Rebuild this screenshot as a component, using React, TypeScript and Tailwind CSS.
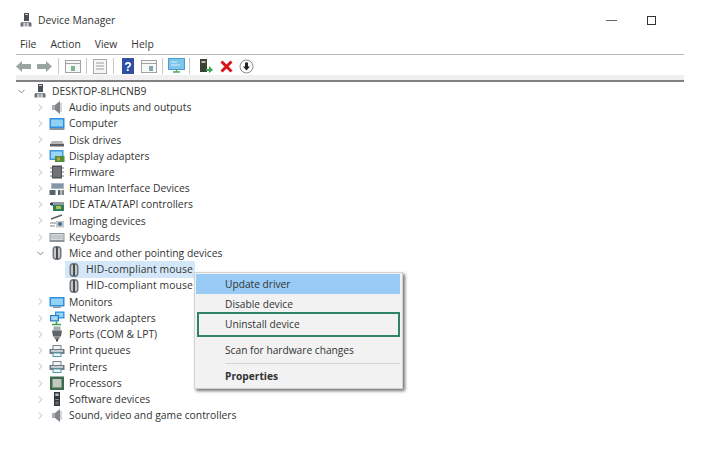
import { ChevronDown, ChevronRight } from "lucide-react";

type IconName =
  | "pc" | "audio" | "computer" | "disk" | "display" | "firmware" | "hid" | "ide" | "imaging"
  | "keyboard" | "mouse" | "monitor" | "network" | "ports" | "printer" | "cpu" | "software";

function DeviceIcon({ name }: { name: IconName }) {
  return (
    <svg width="16" height="16" viewBox="0 0 16 16" className="shrink-0">
      {name === "pc" && (
        <>
          <rect x="6" y="1" width="5" height="8" fill="#4a5058" />
          <rect x="7" y="2" width="3" height="1" fill="#c9ced4" />
          <path d="M3 10h10v1H3z" fill="#8a9096" />
          <rect x="2.500" y="11" width="3" height="3.500" fill="#6b7178" />
          <rect x="6.500" y="11" width="3" height="3.500" fill="#a0a5aa" />
          <rect x="10.500" y="11" width="3" height="3.500" fill="#6b7178" />
        </>
      )}
      {name === "audio" && (
        <>
          <path d="M3 6h3v5H3z" fill="#a9aeb2" />
          <path d="M6 6l5-4v13l-5-4z" fill="#7f8589" />
          <path d="M12 4v9" stroke="#c5c9cc" strokeWidth="1.5" />
        </>
      )}
      {name === "computer" && (
        <>
          <rect x="0.5" y="2" width="15" height="10" fill="#2f8fdc" />
          <rect x="2" y="3.5" width="12" height="7" fill="#8fd0f5" />
          <rect x="0.5" y="12" width="15" height="2" fill="#8a949c" />
        </>
      )}
      {name === "disk" && (
        <>
          <path d="M3 9h10l2 3H1z" fill="#b3b7ba" />
          <rect x="1" y="12" width="14" height="2.5" fill="#5c6064" />
        </>
      )}
      {name === "display" && (
        <>
          <rect x="0.5" y="2" width="14" height="10" fill="#3c97de" />
          <rect x="2" y="3.5" width="11" height="7" fill="#9bd5f5" />
          <rect x="6" y="8" width="9.5" height="6" fill="#4f8f3a" />
          <rect x="8" y="9.5" width="3" height="3" fill="#c4a73a" />
        </>
      )}
      {name === "firmware" && (
        <>
          <rect x="3" y="1.5" width="10" height="13" fill="#4e5254" />
          <path d="M5 3v10M7 3v10M9 3v10M11 3v10" stroke="#a5a8a9" strokeWidth="0.8" />
          <path d="M1 4h2M1 8h2M1 12h2M13 4h2M13 8h2M13 12h2" stroke="#777" />
        </>
      )}
      {name === "hid" && (
        <>
          <rect x="2" y="3" width="13" height="6" fill="#a9b8c6" />
          <path d="M3 5h11M3 7h11" stroke="#5f7387" />
          <rect x="0.5" y="10" width="6" height="5" fill="#59636c" />
          <rect x="9" y="10" width="2.5" height="5" fill="#59636c" />
          <rect x="12.5" y="10" width="2.5" height="5" fill="#7a848c" />
        </>
      )}
      {name === "ide" && (
        <>
          <path d="M2 5h13v4H2z" fill="#8f9ba3" />
          <rect x="4" y="8" width="11" height="6" fill="#2f7f5a" />
          <rect x="7" y="9" width="5" height="3" fill="#b8c24a" />
          <rect x="1" y="6" width="3" height="2" fill="#3c4246" />
        </>
      )}
      {name === "imaging" && (
        <>
          <path d="M2 6l11-4" stroke="#5c6064" strokeWidth="1.6" />
          <path d="M1 10h6" stroke="#a0a5a9" strokeWidth="1.4" />
          <rect x="7" y="8" width="8" height="6.5" fill="#c3c8cc" />
          <circle cx="11" cy="11" r="2" fill="#3f6f92" />
          <path d="M1 13h5" stroke="#7f8589" />
        </>
      )}
      {name === "keyboard" && (
        <>
          <rect x="0.5" y="4" width="15" height="9" fill="#8e959b" />
          <rect x="1.5" y="5" width="13" height="6" fill="#d5d9dc" />
          <path d="M2 7h12M2 9h12" stroke="#a5abb0" strokeWidth="0.7" />
        </>
      )}
      {name === "mouse" && (
        <>
          <rect x="3.5" y="1" width="9" height="14" rx="4" fill="#70767b" />
          <rect x="5" y="2.5" width="6" height="11" rx="2.5" fill="#c5c9cc" />
          <rect x="7" y="2" width="2" height="12" fill="#474c50" />
        </>
      )}
      {name === "monitor" && (
        <>
          <rect x="0.5" y="3" width="15" height="9.5" fill="#2f8fdc" />
          <rect x="2" y="4.5" width="12" height="6.5" fill="#92d2f5" />
          <rect x="4" y="12.5" width="8" height="1.5" fill="#8a949c" />
        </>
      )}
      {name === "network" && (
        <>
          <rect x="6" y="1.5" width="9.5" height="7" fill="#2f8fdc" />
          <rect x="7.2" y="2.7" width="7" height="4.5" fill="#92d2f5" />
          <rect x="1" y="5" width="9" height="6.5" fill="#2f7fc8" />
          <rect x="2.2" y="6.2" width="6.5" height="4" fill="#a5daf6" />
          <path d="M3 14.5h9M7.5 11.5v3" stroke="#3f9f4f" strokeWidth="1.6" />
        </>
      )}
      {name === "ports" && (
        <>
          <rect x="4.5" y="0.5" width="7" height="4" fill="#a7acb0" />
          <path d="M3 4.500h10l-1 6H4z" fill="#5e6468" />
          <path d="M5 10.500h6l-1 3H6z" fill="#7d8387" />
          <rect x="7" y="13" width="2" height="2.500" fill="#4a4f52" />
        </>
      )}
      {name === "printer" && (
        <>
          <rect x="4" y="2.5" width="8" height="4" fill="#f4f5f6" stroke="#7b8186" />
          <rect x="0.5" y="6" width="15" height="5" fill="#6f7a83" />
          <rect x="2" y="7" width="12" height="2" fill="#c5ccd2" />
          <rect x="4" y="10" width="8" height="3.5" fill="#f4f5f6" stroke="#4f9bb0" />
        </>
      )}
      {name === "cpu" && (
        <>
          <rect x="1" y="1.5" width="14" height="13.5" fill="#3f6b4c" />
          <rect x="3.5" y="4" width="9" height="8.5" fill="#c3c8c2" />
        </>
      )}
      {name === "software" && (
        <>
          <rect x="5" y="1" width="6" height="14" fill="#33383c" />
          <rect x="6.3" y="2.5" width="3.4" height="2.5" fill="#b7bcc0" />
          <rect x="6.3" y="8" width="3.4" height="1" fill="#8a9095" />
          <rect x="6.3" y="10.5" width="3.4" height="3" fill="#666c70" />
        </>
      )}
    </svg>
  );
}

function TreeRow({ icon, label, open }: { icon: IconName; label: string; open?: boolean }) {
  const Chevron = open ? ChevronDown : ChevronRight;
  return (
    <div className="flex h-[16.22px] items-center">
      <div className="flex w-[17px] justify-center">
        <Chevron size={11} strokeWidth={1.6} className={open ? "text-[#555]" : "text-[#999]"} />
      </div>
      <DeviceIcon name={icon} />
      <span className="ml-[4px] whitespace-nowrap pt-[1px]">{label}</span>
    </div>
  );
}

function ChildRow({ selected }: { selected?: boolean }) {
  return (
    <div className="flex h-[16.22px] items-center pl-[33px]">
      <div className={`flex h-full w-[130px] items-center pl-[1px] ${selected ? "bg-[#d3e7f8]" : ""}`}>
        <DeviceIcon name="mouse" />
        <span className="ml-[4px] whitespace-nowrap pt-[1px] tracking-[0.1px]">HID-compliant mouse</span>
      </div>
    </div>
  );
}

function Toolbar() {
  return (
    <div className="ml-[16px] w-[668px]">
      <div className="flex h-[20px] items-center pt-[2px]">
        <svg width="15" height="11" viewBox="0 0 15 11"><path d="M0 5.500L6 0v3h9v5H6v3z" fill="#9aa5a1" /></svg>
        <svg width="15" height="11" viewBox="0 0 15 11" className="ml-[6px]"><path d="M15 5.500L9 0v3H0v5h9v3z" fill="#9aa5a1" /></svg>
        <div className="ml-[6px] h-[16px] w-px bg-[#c4c8cc]" />
        <svg width="16" height="13" viewBox="0 0 16 13" className="ml-[6px]">
          <rect x="0.5" y="0.5" width="15" height="12" fill="#f8f8f8" stroke="#a2a2a2" />
          <path d="M1 3.500h14" stroke="#a2a2a2" />
          <rect x="6" y="6" width="4" height="5" fill="#7fb58a" />
        </svg>
        <div className="ml-[5px] h-[16px] w-px bg-[#c4c8cc]" />
        <svg width="14" height="15" viewBox="0 0 14 15" className="ml-[6px]">
          <rect x="0.5" y="0.5" width="13" height="14" fill="#f6f6f6" stroke="#a8a8a8" />
          <path d="M3 4h8M3 7h8M3 10h8" stroke="#bcbcbc" strokeWidth="1.5" />
        </svg>
        <div className="ml-[6px] h-[16px] w-px bg-[#c4c8cc]" />
        <svg width="12" height="16" viewBox="0 0 12 16" className="ml-[8px]">
          <rect width="12" height="16" fill="#2f4f9f" />
          <text x="6" y="13" fontSize="12" fontWeight="700" fill="#fff" textAnchor="middle" fontFamily="Liberation Sans, sans-serif">?</text>
        </svg>
        <svg width="16" height="13" viewBox="0 0 16 13" className="ml-[7px]">
          <rect x="0.5" y="0.5" width="15" height="12" fill="#f8f8f8" stroke="#a2a2a2" />
          <path d="M1 3.500h14" stroke="#a2a2a2" />
          <rect x="8" y="6" width="4" height="5" fill="#7fa8b5" />
        </svg>
        <div className="ml-[5px] h-[16px] w-px bg-[#c4c8cc]" />
        <svg width="17" height="16" viewBox="0 0 17 16" className="ml-[5px]">
          <rect x="0.5" y="0.5" width="16" height="11" fill="#7cc4ea" stroke="#4a9bd0" />
          <path d="M3 4h6M3 7h9" stroke="#d8effa" />
          <path d="M5 14h7M8.500 12v2" stroke="#5aa75a" strokeWidth="1.5" />
        </svg>
        <div className="ml-[4px] h-[16px] w-px bg-[#c4c8cc]" />
        <svg width="14" height="16" viewBox="0 0 14 16" className="ml-[9px]">
          <rect x="1" y="1" width="7" height="13" fill="#3c4236" />
          <rect x="2.500" y="3" width="4" height="2" fill="#b8bcb0" />
          <path d="M7 11h3V8l4 4-4 3v-2H7z" fill="#3aa655" />
        </svg>
        <svg width="13" height="13" viewBox="0 0 13 13" className="ml-[7px]">
          <path d="M1.500 1.500l10 10M11.500 1.500l-10 10" stroke="#d8141c" strokeWidth="3" />
        </svg>
        <svg width="15" height="15" viewBox="0 0 15 15" className="ml-[6px]">
          <circle cx="7.500" cy="7.500" r="6.500" fill="#fff" stroke="#8a8a8a" />
          <path d="M6 3.500h3v4h2l-3.500 4L4 7.500h2z" fill="#222" />
        </svg>
      </div>
      <div className="h-[5px] bg-[#f0f0f0]" />
      <div className="h-[2px] bg-[#808080]" />
    </div>
  );
}

function ContextMenu() {
  return (
    <div className="absolute top-[272px] left-[194px] flex h-[117px] w-[209px] flex-col border border-[#d2d2d2] bg-[#f2f2f2] pt-[1px] pr-[2px] pl-[1px] text-[10.2px] text-[#333] shadow-[2px_2px_3px_rgba(0,0,0,0.55)]">
      <div className="flex h-[20px] shrink-0 items-center bg-[#98cbf6] pt-[2px] pl-[29px]">Update driver</div>
      <div className="flex h-[20px] shrink-0 items-center pt-[2px] pl-[29px]">Disable device</div>
      <div className="mt-[-2px] ml-[1px] flex h-[25px] shrink-0 items-center border-2 border-[#2e8463] pl-[26px]">Uninstall device</div>
      <div className="mt-[4px] flex h-[18px] shrink-0 items-center pt-[2px] pl-[29px]">Scan for hardware changes</div>
      <div className="mt-[4px] ml-[29px] h-px shrink-0 bg-[#d4d4d4]" />
      <div className="mt-[3px] flex h-[18px] shrink-0 items-center pt-[2px] pl-[29px] font-bold">Properties</div>
    </div>
  );
}

export default function App() {
  return (
    <div className="relative h-[456px] w-[710px] overflow-hidden bg-white pt-[8px] font-['Open_Sans',sans-serif] text-[10.35px] text-[#333]">
      {/* Title bar */}
      <div className="flex h-[24px] items-center pl-[18px]">
        <DeviceIcon name="pc" />
        <span className="ml-[4px] pt-[2px]">Device Manager</span>
        <div className="mr-[30px] ml-auto h-px w-[11px] bg-[#666]" />
        <div className="mr-[54px] h-[9px] w-[9px] border border-[#333]" />
      </div>

      {/* Menu bar */}
      <div className="mt-[4px] ml-[16px] flex h-[16px] w-[668px] items-center gap-[14px] pt-[2px] pl-[4px]">
        <span>File</span>
        <span>Action</span>
        <span>View</span>
        <span>Help</span>
      </div>
      <div className="mt-[2px] ml-[16px] h-px w-[668px] bg-[#b8b8b8]" />
      <Toolbar />

      {/* Device tree */}
      <div className="mt-[1px] pl-[16px]">
        <div className="flex h-[16.22px] items-center">
          <ChevronDown size={11} strokeWidth={1.6} className="text-[#555]" />
          <div className="ml-[5px]"><DeviceIcon name="pc" /></div>
          <span className="ml-[4px] pt-[1px]">DESKTOP-8LHCNB9</span>
        </div>
        <div className="pl-[16px]">
          <TreeRow icon="audio" label="Audio inputs and outputs" />
          <TreeRow icon="computer" label="Computer" />
          <TreeRow icon="disk" label="Disk drives" />
          <TreeRow icon="display" label="Display adapters" />
          <TreeRow icon="firmware" label="Firmware" />
          <TreeRow icon="hid" label="Human Interface Devices" />
          <TreeRow icon="ide" label="IDE ATA/ATAPI controllers" />
          <TreeRow icon="imaging" label="Imaging devices" />
          <TreeRow icon="keyboard" label="Keyboards" />
          <TreeRow icon="mouse" label="Mice and other pointing devices" open />
          <ChildRow selected />
          <ChildRow />
          <TreeRow icon="monitor" label="Monitors" />
          <TreeRow icon="network" label="Network adapters" />
          <TreeRow icon="ports" label="Ports (COM & LPT)" />
          <TreeRow icon="printer" label="Print queues" />
          <TreeRow icon="printer" label="Printers" />
          <TreeRow icon="cpu" label="Processors" />
          <TreeRow icon="software" label="Software devices" />
          <TreeRow icon="audio" label="Sound, video and game controllers" />
        </div>
      </div>

      <ContextMenu />
    </div>
  );
}
